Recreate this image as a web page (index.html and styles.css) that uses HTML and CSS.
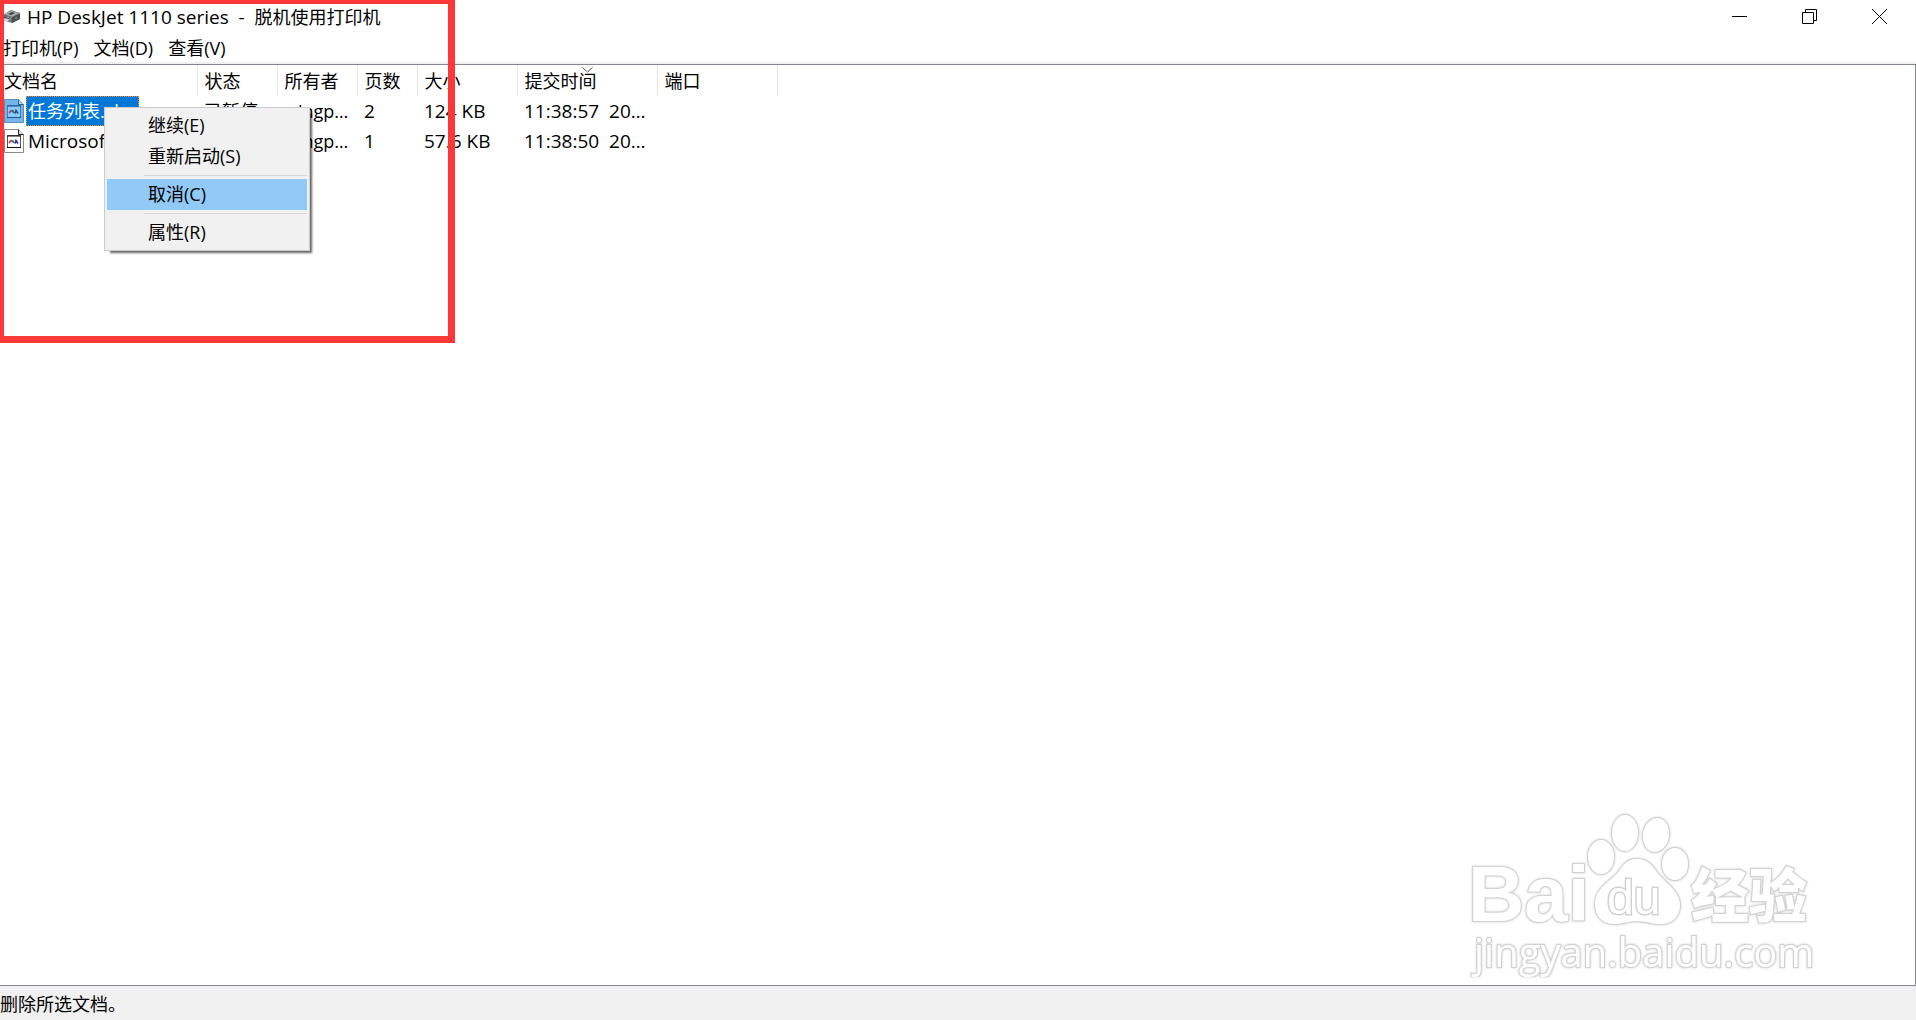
FILE: index.html
```html
<!DOCTYPE html>
<html lang="zh-CN">
<head>
    <meta charset="UTF-8">
    <meta name="viewport" content="width=device-width, initial-scale=1.0">
    <title>HP DeskJet 1110 series - 脱机使用打印机</title>
    <link rel="stylesheet" href="styles.css">
</head>
<body>
    <header class="titlebar">
        <svg class="app-icon" width="17" height="16" viewBox="0 0 17 16">
            <path d="M0 6 L8 1 L17 4 L17 10 L9 14 L0 11z" fill="#6b7074"/>
            <path d="M1 5 L8 2 L16 4 L9 8z" fill="#a9aeb2"/>
            <path d="M5 5 L9 3 L12 4 L8 6z" fill="#3c4043"/>
            <path d="M9 8 L17 5 L17 10 L9 14z" fill="#4b5054"/>
            <path d="M0 10 L5 8 L8 10 L3 13z" fill="#d5d8da"/>
            <path d="M0 8 L7 10" stroke="#33373a"/>
            <path d="M12 9h2" stroke="#79c36b"/>
        </svg>
        <h1 class="title"><span class="latin">HP DeskJet 1110 series&nbsp; -&nbsp; </span>脱机使用打印机</h1>
        <div class="window-buttons">
            <button class="window-button" aria-label="最小化">
                <svg width="15" height="15" viewBox="0 0 15 15"><path d="M0 7.500h15" stroke="#000"/></svg>
            </button>
            <button class="window-button" aria-label="还原">
                <svg width="15" height="15" viewBox="0 0 15 15" fill="none" stroke="#000"><path d="M0.500 3.500h11v11h-11z M3.500 3.500v-3h11v11h-3"/></svg>
            </button>
            <button class="window-button" aria-label="关闭">
                <svg width="15" height="15" viewBox="0 0 15 15"><path d="M0 0L15 15M15 0L0 15" stroke="#000"/></svg>
            </button>
        </div>
    </header>

    <nav class="menubar">
        <button class="menubar-item">打印机(P)</button>
        <button class="menubar-item">文档(D)</button>
        <button class="menubar-item">查看(V)</button>
    </nav>

    <main class="list">
        <table class="jobs">
            <colgroup>
                <col class="col-name">
                <col class="col-status">
                <col class="col-owner">
                <col class="col-pages">
                <col class="col-size">
                <col class="col-time">
                <col class="col-port">
            </colgroup>
            <thead>
                <tr>
                    <th>文档名</th>
                    <th>状态</th>
                    <th>所有者</th>
                    <th>页数</th>
                    <th>大小</th>
                    <th class="sorted">提交时间
                        <svg class="sort-arrow" width="11" height="6" viewBox="0 0 11 6"><path d="M0.500 0.500l5 4.500 5-4.500" fill="none" stroke="#5c5c5c"/></svg>
                    </th>
                    <th>端口</th>
                </tr>
            </thead>
            <tbody>
                <tr class="selected">
                    <td class="name-cell">
                        <div class="name">
                            <svg class="doc-icon" width="20" height="24" viewBox="0 0 20 24">
                                <path d="M0.500 0.500h14l5 5v18h-19z" fill="#75b5e8" stroke="#5590c0"/>
                                <path d="M14.500 0.500v5h5" fill="#a9d4f5" stroke="#23649b"/>
                                <path d="M3.500 6.500h13v12h-13z" fill="#8ecbf4" stroke="#3f7fb5"/>
                                <path d="M3 7h14M3 18.500h14" stroke="#1b5186"/>
                                <path d="M5 14l2-2.500 2 1.500" fill="none" stroke="#a83c78" stroke-width="1.500"/>
                                <path d="M8.500 11l1.500 3" stroke="#16823d" stroke-width="1.500"/>
                                <path d="M11 14.500l1-3 2 3" fill="none" stroke="#1847b8" stroke-width="1.500"/>
                            </svg>
                            <span class="name-text">任务列表.xlsx</span>
                        </div>
                    </td>
                    <td>已暂停</td>
                    <td>wingping</td>
                    <td class="latin">2</td>
                    <td class="latin">124 KB</td>
                    <td class="latin">11:38:57&nbsp; 2018/3/14</td>
                    <td></td>
                </tr>
                <tr>
                    <td class="name-cell">
                        <div class="name">
                            <svg class="doc-icon" width="20" height="24" viewBox="0 0 20 24">
                                <path d="M0.500 0.500h14l5 5v18h-19z" fill="#fff" stroke="#8a8a8a"/>
                                <path d="M14.500 0.500v5h5" fill="#ddd" stroke="#222"/>
                                <path d="M3.500 6.500h13v12h-13z" fill="#fff" stroke="#555"/>
                                <path d="M3 7h14M3 18.500h14" stroke="#111"/>
                                <path d="M5 14l2-2.500 2 1.500" fill="none" stroke="#e0222c" stroke-width="1.500"/>
                                <path d="M8.500 11l1.500 3" stroke="#139334" stroke-width="1.500"/>
                                <path d="M11 14.500l1-3 2 3" fill="none" stroke="#2222c8" stroke-width="1.500"/>
                            </svg>
                            <span class="name-text latin">Microsoft Word</span>
                        </div>
                    </td>
                    <td></td>
                    <td>wingping</td>
                    <td class="latin">1</td>
                    <td class="latin">57.6 KB</td>
                    <td class="latin">11:38:50&nbsp; 2018/3/14</td>
                    <td></td>
                </tr>
            </tbody>
        </table>
    </main>

    <footer class="statusbar">删除所选文档。</footer>

    <div class="context-menu" role="menu">
        <button class="context-item" role="menuitem">继续(E)</button>
        <button class="context-item" role="menuitem">重新启动(S)</button>
        <hr class="context-separator">
        <button class="context-item active" role="menuitem">取消(C)</button>
        <hr class="context-separator">
        <button class="context-item" role="menuitem">属性(R)</button>
    </div>

    <div class="highlight-box"></div>

    <svg class="watermark" width="352" height="170" viewBox="0 0 352 170">
        <g class="watermark-shape">
            <ellipse cx="131" cy="50" rx="13" ry="17"/>
            <ellipse cx="155" cy="26" rx="13" ry="18"/>
            <ellipse cx="186" cy="28" rx="13" ry="17" transform="rotate(10 186 28)"/>
            <ellipse cx="205" cy="57" rx="13" ry="16"/>
            <path d="M167 52C157 52 153 58 149 64C142 74 125 80 125 97C125 110 133 117 144 117C153 117 159 114 167 114C177 114 184 118 193 117C204 116 210 108 210 98C210 84 196 77 187 65C182 58 177 52 167 52z"/>
        </g>
        <text class="watermark-logo" x="-2" y="114">Bai</text>
        <text class="watermark-du" x="137" y="107">du</text>
        <text class="watermark-cjk" x="221" y="110">经验</text>
        <text class="watermark-url" x="4" y="160">jingyan.baidu.com</text>
    </svg>
</body>
</html>
```
FILE: styles.css
```css
* {
    box-sizing: border-box;
}
body {
    margin: 0;
    min-height: 100vh;
    display: flex;
    flex-direction: column;
    position: relative;
    overflow: hidden;
    background: #fff;
    color: #000;
    font-family: "Open Sans", "Noto Sans CJK SC", sans-serif;
    font-size: 18px;
    font-weight: 400;
    line-height: 30px;
}
button {
    border: none;
    padding: 0;
    background: none;
    color: inherit;
    font: inherit;
}
.latin {
    font-size: 19px;
}

/* 标题栏 */
.titlebar {
    display: flex;
    align-items: center;
    height: 34px;
    padding: 0 2px 0 3px;
}
.title {
    flex: 1;
    margin: 0 0 0 7px;
    font-size: 18px;
    font-weight: 400;
}
.window-buttons {
    display: flex;
    align-self: flex-start;
}
.window-button {
    display: flex;
    align-items: center;
    justify-content: center;
    width: 70px;
    height: 32px;
}

/* 菜单栏 */
.menubar {
    display: flex;
    gap: 15px;
    height: 30px;
    padding-left: 3px;
    line-height: 28px;
    border-bottom: 2px solid #f0f0f0;
}

/* 打印任务列表 */
.list {
    flex: 1;
    border-top: 1px solid #828790;
    border-right: 1px solid #828790;
    border-bottom: 1px solid #828790;
}
.jobs {
    table-layout: fixed;
    width: 777px;
    border-collapse: collapse;
}
.col-name { width: 197px; }
.col-status { width: 80px; }
.col-owner { width: 80px; }
.col-pages { width: 60px; }
.col-size { width: 100px; }
.col-time { width: 140px; }
.col-port { width: 120px; }
.jobs th,
.jobs td {
    height: 30px;
    padding: 0 6px 0 7px;
    overflow: hidden;
    text-align: left;
    text-overflow: ellipsis;
    white-space: nowrap;
    font-weight: 400;
}
.jobs th {
    position: relative;
    height: 31px;
    padding-top: 1px;
    border-right: 1px solid #e5e5e5;
}
.jobs th:first-child {
    padding-left: 4px;
}
.sort-arrow {
    position: absolute;
    top: 2px;
    left: 50%;
    margin-left: -5px;
}
.jobs .name-cell {
    padding: 0 0 0 4px;
}
.name {
    display: flex;
    align-items: center;
    gap: 2px;
}
.name-text {
    padding: 0 2px;
}
.selected .name-text {
    background: #0078d7;
    color: #fff;
    outline: 1px dotted #ff8728;
    outline-offset: -1px;
}

/* 状态栏 */
.statusbar {
    height: 34px;
    line-height: 36px;
    background: #f0f0f0;
}

/* 右键菜单 */
.context-menu {
    position: absolute;
    top: 107px;
    left: 104px;
    width: 206px;
    padding: 2px;
    border: 1px solid #ccc;
    background: #f1f1f1;
    box-shadow: 4px 4px 2px -2px rgba(0, 0, 0, 0.6);
}
.context-item {
    display: block;
    width: 100%;
    height: 31px;
    padding-left: 41px;
    text-align: left;
    line-height: 31px;
}
.context-item.active {
    background: #91c9f7;
}
.context-separator {
    height: 1px;
    margin: 3px 0 3px 37px;
    border: none;
    background: #d7d7d7;
}

/* 红色标注框 */
.highlight-box {
    position: absolute;
    top: 0;
    left: 0;
    width: 455px;
    height: 343px;
    border: solid #fb3838;
    border-width: 4px 7px 7px 4px;
    pointer-events: none;
}

/* 水印 */
.watermark {
    position: absolute;
    right: 94px;
    bottom: 43px;
    fill: #fff;
    stroke: #d2d2d2;
    stroke-width: 2;
    paint-order: stroke;
    filter: drop-shadow(0 0 1px #ccc);
}
.watermark-logo {
    font: 700 78px "Liberation Sans", Arial, sans-serif;
}
.watermark-du {
    font: 400 48px "Liberation Sans", Arial, sans-serif;
    stroke-width: 3;
}
.watermark-cjk {
    font: 900 58px "Noto Sans CJK SC", sans-serif;
}
.watermark-url {
    font: 400 40px "Open Sans", sans-serif;
}
```
